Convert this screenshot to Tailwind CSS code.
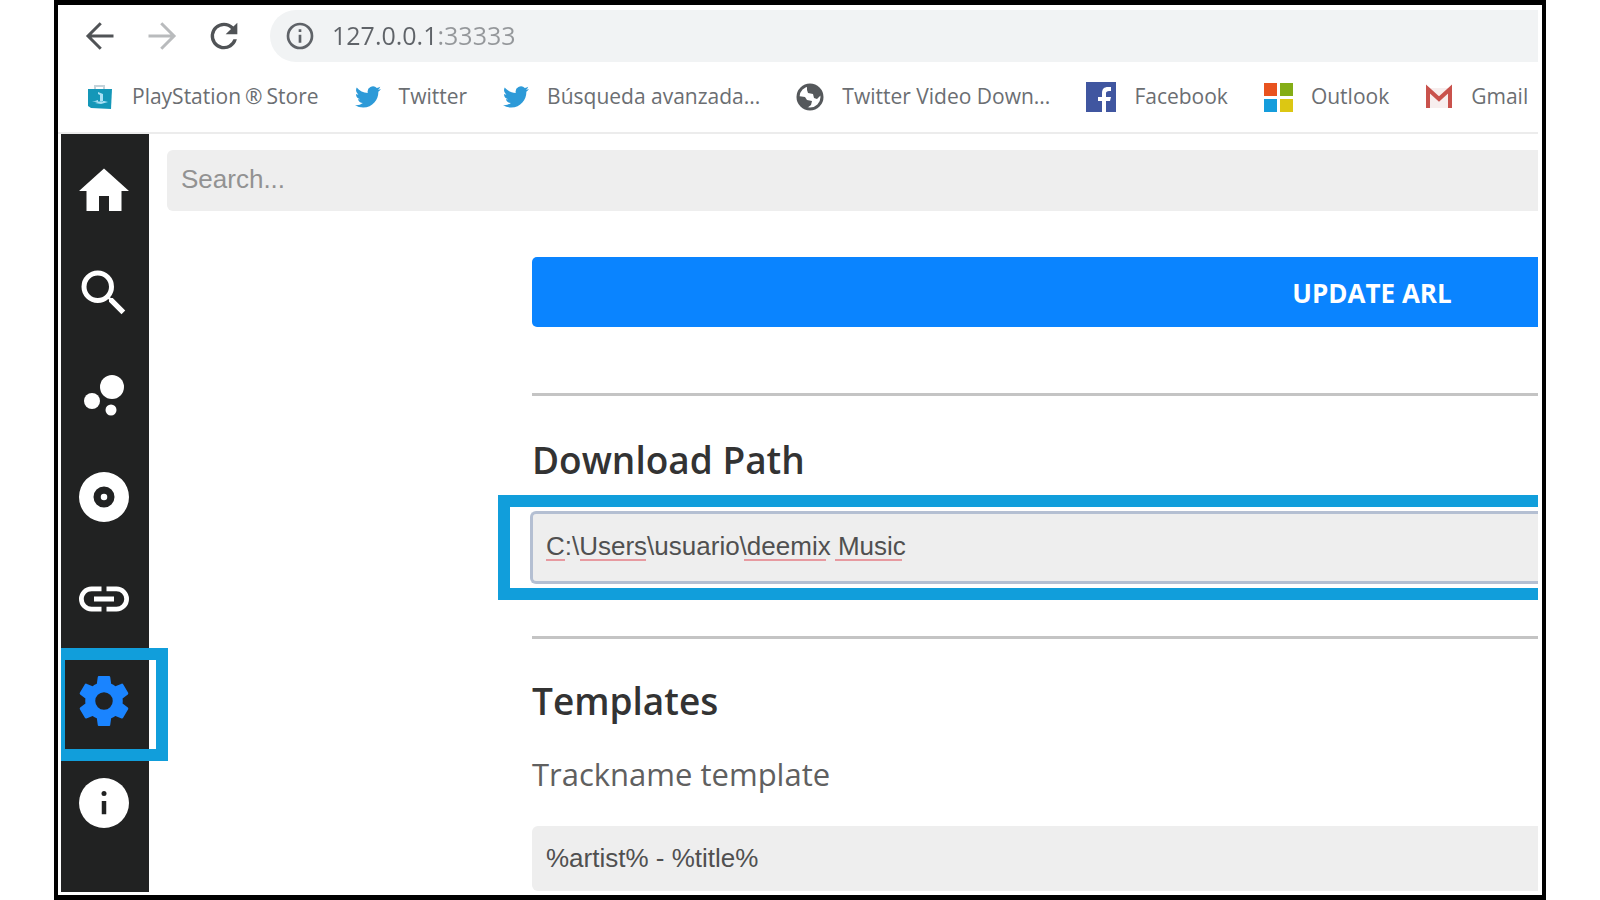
<!DOCTYPE html>
<html lang="en">
   <head>
      <meta charset="UTF-8" />
      <meta name="viewport" content="width=device-width, initial-scale=1.0" />
      <title>deemix</title>
      <script src="https://cdn.jsdelivr.net/npm/@tailwindcss/browser@4"></script>
   </head>
   <body class="bg-white">
      <div
         class="mx-[54px] h-screen overflow-hidden border-4 border-t-5 border-b-5 border-black bg-white flex flex-col font-['Open_Sans',sans-serif]"
      >
         <!-- browser toolbar -->
         <header class="mr-1 shrink-0">
            <div class="flex items-center pt-[5px] pl-6">
               <button aria-label="Back" class="text-[#505356]">
                  <svg class="size-9" viewBox="0 0 24 24" fill="none" stroke="currentColor" stroke-width="2">
                     <path d="M21 12H4M12.500 3.500L4 12l8.500 8.500" />
                  </svg>
               </button>
               <button aria-label="Forward" class="ml-[26px] text-[#b9bbbd]">
                  <svg class="size-9" viewBox="0 0 24 24" fill="none" stroke="currentColor" stroke-width="2">
                     <path d="M3 12h17M11.500 3.500L20 12l-8.500 8.500" />
                  </svg>
               </button>
               <button aria-label="Reload" class="ml-[24px] text-[#505356]">
                  <svg class="size-10" viewBox="0 0 24 24" fill="currentColor">
                     <path d="M17.650 6.350A7.960 7.960 0 0 0 12 4a8 8 0 1 0 7.730 10h-2.080A6 6 0 1 1 12 6c1.660 0 3.140.690 4.220 1.780L13 11h7V4z" />
                  </svg>
               </button>
               <div class="ml-[26px] flex h-[52px] flex-1 items-center rounded-l-full bg-[#f1f3f4] pl-[14px]">
                  <svg class="size-8 text-[#5f6368]" viewBox="0 0 24 24" fill="currentColor">
                     <path d="M11 17h2v-6h-2zm1-15a10 10 0 1 0 0 20 10 10 0 0 0 0-20zm0 18a8 8 0 1 1 0-16 8 8 0 0 1 0 16zM11 9h2V7h-2z" />
                  </svg>
                  <input
                     type="text"
                     aria-label="Address"
                     value="127.0.0.1:33333"
                     class="ml-4 flex-1 bg-[linear-gradient(90deg,#5f6368_104px,#94979a_104px)] bg-clip-text text-[25px] text-transparent outline-none"
                  />
               </div>
            </div>

            <!-- bookmarks -->
            <nav
               class="flex h-[72px] items-center gap-9 overflow-hidden border-b-2 border-[#ececec] pl-7 text-[21px] whitespace-nowrap text-[#6b6e72]"
            >
               <a href="#" class="flex items-center gap-[18px]">
                  <svg class="size-7" viewBox="0 0 28 28">
                     <path d="M9 7V3h9v4" fill="none" stroke="#c4d3da" stroke-width="2" />
                     <path d="M2 6h24l-1 20-20-1-3-2z" fill="#1497b8" />
                     <path d="M12 9l5 2v8l-3-1v-6l-2-1zM6 19l6-2v2l-3 1 6 1 7-2-4-1" fill="#a9e1f5" />
                  </svg>
                  <span>PlayStation<span class="mx-1">®</span>Store</span>
               </a>
               <a href="#" class="flex items-center gap-[18px]">
                  <svg class="size-[26px]" viewBox="0 0 24 24" fill="#2d9ad8">
                     <path d="M23.950 4.570a10 10 0 0 1-2.820.770 4.960 4.960 0 0 0 2.160-2.720c-.950.550-2 .950-3.130 1.180a4.920 4.920 0 0 0-8.380 4.480C7.690 8.100 4.070 6.130 1.640 3.160a4.920 4.920 0 0 0 1.520 6.570 4.900 4.900 0 0 1-2.230-.610v.060a4.920 4.920 0 0 0 3.950 4.830 5 5 0 0 1-2.210.080 4.940 4.940 0 0 0 4.600 3.420A9.870 9.870 0 0 1 0 19.540a13.990 13.990 0 0 0 7.550 2.210c9.140 0 14.300-7.720 13.990-14.650a10 10 0 0 0 2.410-2.530z" />
                  </svg>
                  Twitter
               </a>
               <a href="#" class="flex items-center gap-[18px]">
                  <svg class="size-[26px]" viewBox="0 0 24 24" fill="#2d9ad8">
                     <path d="M23.950 4.570a10 10 0 0 1-2.820.770 4.960 4.960 0 0 0 2.160-2.720c-.950.550-2 .950-3.130 1.180a4.920 4.920 0 0 0-8.380 4.480C7.690 8.100 4.070 6.130 1.640 3.160a4.920 4.920 0 0 0 1.520 6.570 4.900 4.900 0 0 1-2.230-.610v.060a4.920 4.920 0 0 0 3.950 4.830 5 5 0 0 1-2.210.080 4.940 4.940 0 0 0 4.600 3.420A9.870 9.870 0 0 1 0 19.540a13.990 13.990 0 0 0 7.550 2.210c9.140 0 14.300-7.720 13.990-14.650a10 10 0 0 0 2.410-2.530z" />
                  </svg>
                  Búsqueda avanzada...
               </a>
               <a href="#" class="flex items-center gap-[18px]">
                  <svg class="size-7" viewBox="0 0 28 28">
                     <circle cx="14" cy="14" r="12" fill="#fff" stroke="#55585b" stroke-width="3" />
                     <path d="M11 3c7-2 14 3 14 9l-4 4-3-1-1-4-5-1-1-3zM2 13l7 1 2 3 5 1-1 4-4 3C6 24 2 20 2 13z" fill="#55585b" />
                  </svg>
                  Twitter Video Down...
               </a>
               <a href="#" class="flex items-center gap-[18px]">
                  <svg class="size-[30px]" viewBox="0 0 30 30">
                     <path d="M0 0h30v30H0z" fill="#4056a0" />
                     <path d="M16 30V19h-4v-4h4v-4c0-4 2-6 6-6h3v4h-2c-2 0-3 1-3 2v4h5l-1 4h-4v11z" fill="#fff" />
                  </svg>
                  Facebook
               </a>
               <a href="#" class="flex items-center gap-[18px]">
                  <svg class="size-[29px]" viewBox="0 0 29 29">
                     <path d="M0 0h13v13H0z" fill="#e8531f" />
                     <path d="M16 0h13v13H16z" fill="#84ad16" />
                     <path d="M0 16h13v13H0z" fill="#159ddc" />
                     <path d="M16 16h13v13H16z" fill="#dcc713" />
                  </svg>
                  Outlook
               </a>
               <a href="#" class="flex items-center gap-[18px]">
                  <svg class="size-7" viewBox="0 0 28 28">
                     <path d="M3 5h22v20H3z" fill="#f7eeee" />
                     <path d="M3 25V6l11 10L25 6v19" fill="none" stroke="#c9524c" stroke-width="4" />
                  </svg>
                  Gmail
               </a>
            </nav>
         </header>

         <div class="mr-1 mb-[3px] ml-[3px] flex min-h-0 flex-1">
            <!-- sidebar -->
            <aside class="relative w-[88px] shrink-0 bg-[#212222] pt-[6px] text-white">
               <nav class="flex flex-col pr-0.5">
                  <a href="#" aria-label="Home" class="flex h-[102px] items-center justify-center">
                     <svg class="size-[60px]" viewBox="0 0 24 24" fill="currentColor">
                        <path d="M10 20v-6h4v6h5v-8h3L12 3 2 12h3v8z" />
                     </svg>
                  </a>
                  <a href="#" aria-label="Search" class="flex h-[102px] items-center justify-center">
                     <svg class="size-[60px]" viewBox="0 0 24 24" fill="currentColor">
                        <path d="M15.500 14h-.790l-.280-.270A6.470 6.470 0 0 0 16 9.500 6.500 6.500 0 1 0 9.500 16c1.610 0 3.090-.590 4.230-1.570l.270.280v.790l5 4.990L20.490 19zm-6 0a4.500 4.500 0 1 1 0-9 4.500 4.500 0 0 1 0 9z" />
                     </svg>
                  </a>
                  <a href="#" aria-label="Charts" class="flex h-[102px] items-center justify-center">
                     <svg class="size-[60px]" viewBox="0 0 24 24" fill="currentColor">
                        <circle cx="7.200" cy="14.400" r="3.200" />
                        <circle cx="14.800" cy="18" r="2.200" />
                        <circle cx="15.200" cy="8.800" r="4.800" />
                     </svg>
                  </a>
                  <a href="#" aria-label="Favorites" class="flex h-[102px] items-center justify-center">
                     <svg class="size-[60px]" viewBox="0 0 24 24" fill="currentColor">
                        <path d="M12 2a10 10 0 1 0 0 20 10 10 0 0 0 0-20zm0 14.200a4.200 4.200 0 1 1 0-8.400 4.200 4.200 0 0 1 0 8.400z" />
                        <circle cx="12" cy="12" r="1.300" />
                     </svg>
                  </a>
                  <a href="#" aria-label="Link analyzer" class="flex h-[102px] items-center justify-center">
                     <svg class="size-[60px]" viewBox="0 0 24 24" fill="currentColor">
                        <path d="M3.900 12c0-1.710 1.390-3.100 3.100-3.100h4V7H7a5 5 0 0 0 0 10h4v-1.900H7A3.100 3.100 0 0 1 3.900 12zM8 13h8v-2H8zm9-6h-4v1.900h4a3.100 3.100 0 0 1 0 6.200h-4V17h4a5 5 0 0 0 0-10z" />
                     </svg>
                  </a>
                  <a href="#" aria-label="Settings" class="flex h-[102px] items-center justify-center text-[#1a84ff]">
                     <svg class="size-[60px]" viewBox="0 0 24 24" fill="currentColor">
                        <path d="M19.430 12.980c.040-.320.070-.640.070-.980s-.030-.660-.070-.980l2.110-1.650c.190-.150.240-.420.120-.640l-2-3.460c-.120-.220-.390-.300-.610-.220l-2.490 1c-.520-.400-1.080-.730-1.690-.980l-.380-2.650A.490.490 0 0 0 14 2h-4c-.250 0-.460.180-.490.420l-.380 2.650c-.610.250-1.170.590-1.690.980l-2.490-1c-.230-.090-.490 0-.610.220l-2 3.460c-.130.220-.070.490.120.640l2.110 1.650c-.040.320-.070.650-.070.980s.030.660.070.980l-2.110 1.650c-.190.150-.240.420-.120.640l2 3.460c.120.220.390.300.610.220l2.490-1c.520.400 1.080.730 1.690.980l.380 2.650c.030.240.240.420.490.420h4c.250 0 .460-.180.490-.420l.380-2.650c.610-.250 1.170-.590 1.690-.980l2.490 1c.230.090.490 0 .610-.220l2-3.460c.120-.220.070-.490-.120-.640zM12 15.500a3.500 3.500 0 1 1 0-7 3.500 3.500 0 0 1 0 7z" />
                     </svg>
                  </a>
                  <a href="#" aria-label="About" class="flex h-[102px] items-center justify-center">
                     <svg class="size-[60px]" viewBox="0 0 24 24">
                        <circle cx="12" cy="12" r="10" fill="currentColor" />
                        <circle cx="12" cy="8.200" r="1" fill="#212222" />
                        <path d="M11.100 11.200h1.800v5.300h-1.800z" fill="#212222" />
                     </svg>
                  </a>
               </nav>
               <!-- settings marker -->
               <div
                  class="pointer-events-none absolute top-[514px] left-0 h-[113px] w-[107px] border-12 border-l-4 border-[#119edb]"
               ></div>
            </aside>

            <main class="min-w-0 flex-1 overflow-hidden pt-4">
               <input
                  type="search"
                  aria-label="Search"
                  placeholder="Search..."
                  class="ml-[18px] block h-[61px] w-full rounded-md bg-[#eeeeee] px-[14px] pb-0.5 font-['Liberation_Sans',sans-serif] text-[26px] text-[#333] outline-none placeholder:text-[#929292]"
               />

               <div class="mt-[46px] ml-[383px] text-[#333]">
                  <button
                     class="block h-[70px] w-[167%] rounded-[5px] bg-[#0a84ff] pt-[3px] text-[26px] font-bold text-white uppercase"
                  >
                     Update ARL
                  </button>

                  <hr class="mt-[66px] border-t-3 border-[#c4c4c4]" />
                  <h2 class="mt-10 text-[37px] leading-[48px] font-semibold">
                     <label for="download-path">Download Path</label>
                  </h2>
                  <div class="mt-[11px] -ml-[34px] border-12 border-r-0 border-[#119edb] py-1 pl-5">
                     <div class="relative">
                        <input
                           id="download-path"
                           type="text"
                           spellcheck="false"
                           value="C:\Users\usuario\deemix Music"
                           class="block h-[73px] w-full rounded-l-md border-3 border-r-0 border-[#b4bfd2] bg-[#eeeeee] px-[13px] pb-0.5 font-['Liberation_Sans',sans-serif] text-[26px] text-[#505050] outline-none"
                        />
                        <!-- spelling marks -->
                        <svg
                           class="pointer-events-none absolute top-[47px] left-4 h-1 w-[360px]"
                           fill="none"
                           stroke="#e79aa0"
                           stroke-width="2"
                        >
                           <path d="M0 2h19M34 2h66M198 2h82M289 2h67" />
                        </svg>
                     </div>
                  </div>

                  <hr class="mt-9 border-t-3 border-[#c4c4c4]" />
                  <h2 class="mt-[38px] text-[37px] leading-[48px] font-semibold">Templates</h2>
                  <label for="track-template" class="mt-[29px] block text-[31px] leading-10 text-[#606060]">
                     Trackname template
                  </label>
                  <input
                     id="track-template"
                     type="text"
                     value="%artist% - %title%"
                     class="mt-8 block h-[65px] w-full rounded-l-md bg-[#eeeeee] px-[14px] font-['Liberation_Sans',sans-serif] text-[26px] text-[#505050] outline-none"
                  />
               </div>
            </main>
         </div>
      </div>
   </body>
</html>
